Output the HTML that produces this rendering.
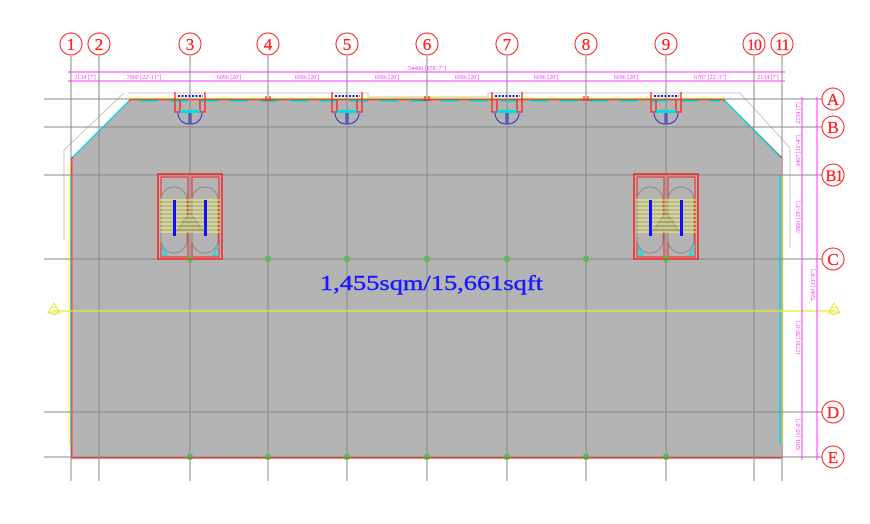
<!DOCTYPE html>
<html><head><meta charset="utf-8"><style>html,body{margin:0;padding:0;background:#fff;width:870px;height:524px;overflow:hidden}svg{display:block}</style></head><body>
<svg width="870" height="524" viewBox="0 0 870 524" xmlns="http://www.w3.org/2000/svg">
<polyline points="128,93 368,93 368,97 488,97 488,93 740,93 790,148 790,248" fill="none" stroke="#c8c8c8" stroke-width="1"/>
<polyline points="124,93 64,150 64,240" fill="none" stroke="#c8c8c8" stroke-width="1"/>
<polygon points="130,101 724,101 781,158 781,457 73,457 73,158" fill="#b4b4b4"/>
<polyline points="130,100 724,100 782,158 782,458 72,458 72,158 130,100" fill="none" stroke="#ff2020" stroke-width="1.3"/>
<polyline points="128,98 726,98" fill="none" stroke="#ffff40" stroke-width="1"/>
<line x1="69" y1="162" x2="69" y2="445" stroke="#ffff40" stroke-width="1"/>
<line x1="71" y1="175" x2="71" y2="445" stroke="#00e0e0" stroke-width="1.5"/>
<line x1="780" y1="175" x2="780" y2="445" stroke="#00e0e0" stroke-width="1.5"/>
<line x1="783" y1="175" x2="783" y2="445" stroke="#ffff40" stroke-width="1"/>
<line x1="73" y1="157" x2="129" y2="101" stroke="#00e0e0" stroke-width="1.5"/>
<line x1="725" y1="101" x2="780" y2="157" stroke="#00e0e0" stroke-width="1.5"/>
<line x1="140" y1="101" x2="720" y2="101" stroke="#00e0e0" stroke-width="1.5" stroke-dasharray="18,12"/>
<g stroke="#888" stroke-width="1">
<line x1="71" y1="56" x2="71" y2="481"/><line x1="99" y1="56" x2="99" y2="481"/>
<line x1="190" y1="56" x2="190" y2="481"/><line x1="268" y1="56" x2="268" y2="481"/>
<line x1="347" y1="56" x2="347" y2="481"/><line x1="427" y1="56" x2="427" y2="481"/>
<line x1="507" y1="56" x2="507" y2="481"/><line x1="586" y1="56" x2="586" y2="481"/>
<line x1="666" y1="56" x2="666" y2="481"/><line x1="754" y1="56" x2="754" y2="481"/>
<line x1="782" y1="56" x2="782" y2="481"/>
<line x1="44" y1="99" x2="822" y2="99"/><line x1="44" y1="127" x2="822" y2="127"/>
<line x1="44" y1="175" x2="822" y2="175"/><line x1="44" y1="259" x2="822" y2="259"/>
<line x1="44" y1="412" x2="822" y2="412"/><line x1="44" y1="457" x2="822" y2="457"/>
</g>
<line x1="52" y1="311" x2="836" y2="311" stroke="#e8e840" stroke-width="1.2"/>
<g fill="none" stroke="#e8e840"><path d="M54,303 L48,313 L60,313 Z"/><circle cx="54" cy="311" r="4"/><path d="M834,303 L828,313 L840,313 Z"/><circle cx="834" cy="311" r="4"/></g>
<g stroke="#ff30ff" stroke-width="1">
<line x1="68" y1="72" x2="785" y2="72"/><line x1="68" y1="81" x2="785" y2="81"/>
<line x1="802" y1="97" x2="802" y2="460"/><line x1="817" y1="97" x2="817" y2="460"/>
</g>
<g font-family="Liberation Serif,serif" font-size="6" fill="#ff30ff" text-anchor="middle">
<text x="427" y="70">54400 [178'-7"]</text>
<text x="85" y="79">2134 [7']</text><text x="144" y="79">7000 [22'-11"]</text>
<text x="229" y="79">6096 [20']</text><text x="307" y="79">6096 [20']</text>
<text x="387" y="79">6096 [20']</text><text x="467" y="79">6096 [20']</text>
<text x="546" y="79">6096 [20']</text><text x="626" y="79">6096 [20']</text>
<text x="710" y="79">6787 [22'-3"]</text><text x="768" y="79">2134 [7']</text>
</g>
<g font-family="Liberation Serif,serif" font-size="6" fill="#ff30ff" text-anchor="middle">
<text transform="translate(800,113) rotate(-90)">2134 [7']</text>
<text transform="translate(800,151) rotate(-90)">3467 [11'-4"]</text>
<text transform="translate(800,217) rotate(-90)">5860 [19'-3"]</text>
<text transform="translate(815,285) rotate(-90)">7240 [23'-9"]</text>
<text transform="translate(800,338) rotate(-90)">11730 [38'-6"]</text>
<text transform="translate(800,435) rotate(-90)">3201 [10'-6"]</text>
</g>
<g id="bay">
<path d="M175,92 V112 H180 V100 M205,92 V112 H200 V100" fill="none" stroke="#ff2020" stroke-width="1.3"/>
<line x1="178" y1="96" x2="203" y2="96" stroke="#1010ff" stroke-width="2" stroke-dasharray="2,1.5"/>
<rect x="180" y="110" width="20" height="3" fill="#00e0e0"/>
<path d="M178,113 A11,11 0 0,0 189,124 V113 M202,113 A11,11 0 0,1 191,124 V113" fill="none" stroke="#3030d0" stroke-width="1"/>
</g>
<use href="#bay" x="157"/><use href="#bay" x="317"/><use href="#bay" x="476"/>
<g fill="none" stroke="#ff2020" stroke-width="1.2">
<path d="M262,100 H274 M266,96 V101 M270,96 V101"/><path d="M421,100 H433 M425,96 V101 M429,96 V101"/><path d="M580,100 H592 M584,96 V101 M588,96 V101"/>
</g>
<g id="st">
<rect x="158" y="174" width="64" height="85" fill="none" stroke="#ff2020" stroke-width="1.5"/>
<rect x="161" y="177" width="27" height="80" fill="none" stroke="#ff2020" stroke-width="1"/>
<rect x="192" y="177" width="27" height="80" fill="none" stroke="#ff2020" stroke-width="1"/>
<path d="M161,200 A13,13 0 0,1 187,200 V240 A13,13 0 0,1 161,240 Z M192,200 A13,13 0 0,1 218,200 V240 A13,13 0 0,1 192,240 Z" fill="none" stroke="#888" stroke-width="1"/>
<path d="M176,232 L190,212 L204,232 Z" fill="#a0a0a0" stroke="#888"/>
<g stroke="#ffff30" stroke-width="1"><line x1="160" y1="200" x2="220" y2="200"/><line x1="160" y1="204" x2="220" y2="204"/><line x1="160" y1="208" x2="220" y2="208"/><line x1="160" y1="212" x2="220" y2="212"/><line x1="160" y1="216" x2="220" y2="216"/><line x1="160" y1="220" x2="220" y2="220"/><line x1="160" y1="224" x2="220" y2="224"/><line x1="160" y1="228" x2="220" y2="228"/><line x1="160" y1="232" x2="220" y2="232"/></g>
<rect x="173" y="200" width="3" height="36" fill="#1010ff"/><rect x="204" y="200" width="3" height="36" fill="#1010ff"/>
<path d="M161,246 L167,255 L161,255 M219,246 L213,255 L219,255" fill="none" stroke="#00e0e0" stroke-width="1.2"/>
</g>
<use href="#st" x="476"/>
<g fill="none" stroke="#20d020"><rect x="188" y="257" width="4" height="4"/><rect x="266" y="257" width="4" height="4"/><rect x="345" y="257" width="4" height="4"/><rect x="425" y="257" width="4" height="4"/><rect x="505" y="257" width="4" height="4"/><rect x="584" y="257" width="4" height="4"/><rect x="664" y="257" width="4" height="4"/>
<rect x="188" y="455" width="4" height="4"/><rect x="266" y="455" width="4" height="4"/><rect x="345" y="455" width="4" height="4"/><rect x="425" y="455" width="4" height="4"/><rect x="505" y="455" width="4" height="4"/><rect x="584" y="455" width="4" height="4"/><rect x="664" y="455" width="4" height="4"/></g>
<text x="320" y="290" font-family="Liberation Serif,serif" font-size="21" fill="#1a1aff" stroke="#1a1aff" stroke-width="0.4" textLength="223" lengthAdjust="spacingAndGlyphs">1,455sqm/15,661sqft</text>
<g fill="#fff" stroke="#ff2020" stroke-width="1">
<circle cx="71" cy="44" r="11"/><circle cx="99" cy="44" r="11"/><circle cx="190" cy="44" r="11"/><circle cx="268" cy="44" r="11"/><circle cx="347" cy="44" r="11"/><circle cx="427" cy="44" r="11"/><circle cx="507" cy="44" r="11"/><circle cx="586" cy="44" r="11"/><circle cx="666" cy="44" r="11"/><circle cx="754" cy="44" r="11"/><circle cx="782" cy="44" r="11"/>
<circle cx="833" cy="99" r="11"/><circle cx="833" cy="127" r="11"/><circle cx="833" cy="175" r="11"/><circle cx="833" cy="259" r="11"/><circle cx="833" cy="412" r="11"/><circle cx="833" cy="457" r="11"/>
</g>
<g font-family="Liberation Serif,serif" font-size="17" fill="#ff2020" stroke="#ff2020" stroke-width="0.3" text-anchor="middle">
<text x="71" y="50">1</text><text x="99" y="50">2</text><text x="190" y="50">3</text><text x="268" y="50">4</text><text x="347" y="50">5</text><text x="427" y="50">6</text><text x="507" y="50">7</text><text x="586" y="50">8</text><text x="666" y="50">9</text><text x="754" y="50" font-size="16" letter-spacing="-1">10</text><text x="782" y="50" font-size="16" letter-spacing="-1">11</text>
<text x="833" y="105">A</text><text x="833" y="133">B</text><text x="834" y="181" font-size="16" letter-spacing="-1">B1</text><text x="833" y="265">C</text><text x="833" y="418">D</text><text x="833" y="463">E</text>
</g>
</svg>
</body></html>
